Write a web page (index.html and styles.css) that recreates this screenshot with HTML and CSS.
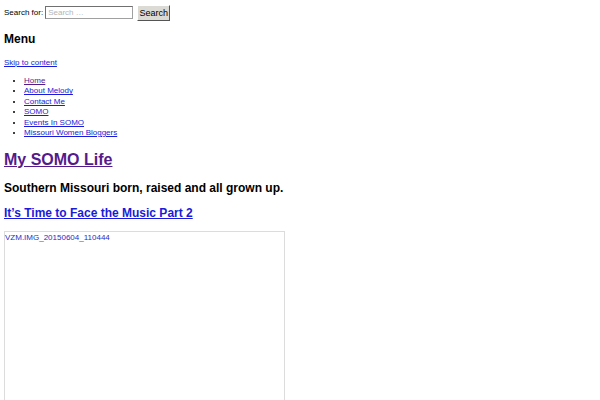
FILE: index.html
```html
<!DOCTYPE html>
<html lang="en">
<head>
    <meta charset="UTF-8">
    <title>My SOMO Life</title>
    <link rel="stylesheet" href="styles.css">
</head>
<body>
    <form class="search-form">
        <label class="search-label" for="s">Search for:</label>
        <input type="search" id="s" class="search-field" placeholder="Search …">
        <button type="submit" class="search-submit">Search</button>
    </form>

    <h2 class="menu-toggle">Menu</h2>
    <a class="skip-link" href="#content">Skip to content</a>

    <ul class="nav-menu">
        <li><a class="visited" href="#">Home</a></li>
        <li><a href="#">About Melody</a></li>
        <li><a href="#">Contact Me</a></li>
        <li><a href="#">SOMO</a></li>
        <li><a href="#">Events In SOMO</a></li>
        <li><a href="#">Missouri Women Bloggers</a></li>
    </ul>

    <h1 class="site-title"><a class="visited" href="#">My SOMO Life</a></h1>
    <h2 class="site-description">Southern Missouri born, raised and all grown up.</h2>

    <div id="content">
        <h2 class="entry-title"><a href="#">It’s Time to Face the Music Part 2</a></h2>
        <div class="entry-image">VZM.IMG_20150604_110444</div>
    </div>
</body>
</html>
```

FILE: styles.css
```css
body {
    margin: 4px;
    font-family: "Liberation Sans", Arial, sans-serif;
    font-size: 8px;
    line-height: 1.15;
    color: #000;
    background: #fff;
}
a {
    color: #1a1adb;
}
a.visited {
    color: #551a8b;
}
.search-form {
    display: flex;
    align-items: center;
    height: 17px;
    margin: 0;
}
.search-label {
    margin-right: 2px;
}
.search-field {
    width: 88px;
    height: 13px;
    box-sizing: border-box;
    padding: 0 2px;
    margin: 0 4px 0 0;
    font-family: inherit;
    font-size: 8px;
    border: 1px solid #a0a0a0;
    border-top-color: #707070;
    border-left-color: #707070;
}
.search-field::placeholder {
    color: #b5b5b5;
}
.search-submit {
    height: 16px;
    width: 33px;
    padding: 0;
    font-family: inherit;
    font-size: 9px;
    background: #dcdad5;
    border: 1px solid #fff;
    border-right-color: #555;
    border-bottom-color: #555;
    color: #000;
}
.menu-toggle {
    font-size: 12px;
    margin: 12px 0 11px;
}
.skip-link {
    display: block;
    margin-bottom: 9px;
}
.nav-menu {
    margin: 0 0 13px;
    padding-left: 20px;
    line-height: 10.4px;
}
.site-title {
    font-size: 16px;
    margin: 8px 0 12px;
}
.site-description {
    font-size: 12px;
    margin: 0 0 11px;
}
.entry-title {
    font-size: 12px;
    margin: 0 0 11px;
}
.entry-image {
    width: 281px;
    height: 200px;
    box-sizing: border-box;
    border: 1px solid #dcdcdc;
    padding: 1px 0 0 0;
    color: #2a2ac8;
    font-size: 8px;
}
```
